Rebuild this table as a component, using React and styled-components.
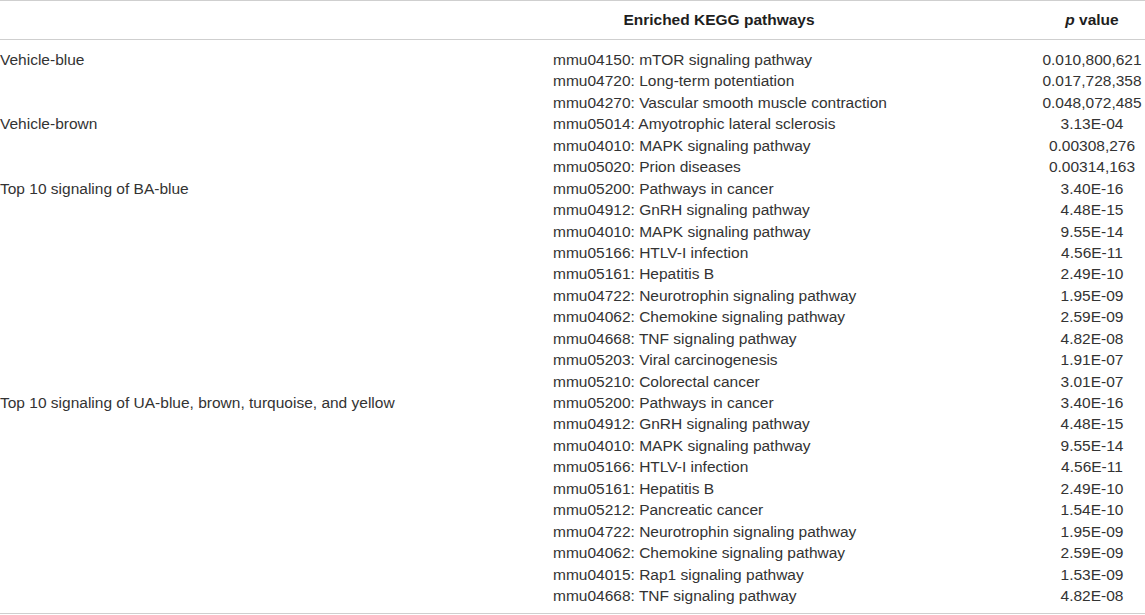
import React from 'react';
import styled, { createGlobalStyle } from 'styled-components';

const Global = createGlobalStyle`
  html, body { margin: 0; padding: 0; background: #fff; }
  body { font-family: "Liberation Sans", Arial, Helvetica, sans-serif; }
`;

const Table = styled.div`
  width: 1145px;
  box-sizing: border-box;
  border-top: 1px solid #cfcfcf;
  border-bottom: 1px solid #cfcfcf;
  color: #333;
  font-size: 15.5px;
`;

const Grid = styled.div`
  display: grid;
  grid-template-columns: 553px 1fr 102px;
  padding-right: 2px;
`;

const HeadRow = styled(Grid)`
  height: 38px;
  align-items: center;
  border-bottom: 1px solid #cfcfcf;
  font-weight: bold;
  color: #1e1e1e;
`;

const PathwayHeading = styled.div`
  width: 332px;
  text-align: center;
`;

const ValueHeading = styled.div`
  text-align: center;
`;

const Body = styled(Grid)`
  padding-top: 9px;
  padding-bottom: 7px;
  line-height: 21.44px;
`;

const Cell = styled.div`
  white-space: nowrap;
  text-align: ${(p) => (p.$center ? 'center' : 'left')};
`;

const groups = [
  {
    label: 'Vehicle-blue',
    rows: [
      ['mmu04150: mTOR signaling pathway', '0.010,800,621'],
      ['mmu04720: Long-term potentiation', '0.017,728,358'],
      ['mmu04270: Vascular smooth muscle contraction', '0.048,072,485'],
    ],
  },
  {
    label: 'Vehicle-brown',
    rows: [
      ['mmu05014: Amyotrophic lateral sclerosis', '3.13E-04'],
      ['mmu04010: MAPK signaling pathway', '0.00308,276'],
      ['mmu05020: Prion diseases', '0.00314,163'],
    ],
  },
  {
    label: 'Top 10 signaling of BA-blue',
    rows: [
      ['mmu05200: Pathways in cancer', '3.40E-16'],
      ['mmu04912: GnRH signaling pathway', '4.48E-15'],
      ['mmu04010: MAPK signaling pathway', '9.55E-14'],
      ['mmu05166: HTLV-I infection', '4.56E-11'],
      ['mmu05161: Hepatitis B', '2.49E-10'],
      ['mmu04722: Neurotrophin signaling pathway', '1.95E-09'],
      ['mmu04062: Chemokine signaling pathway', '2.59E-09'],
      ['mmu04668: TNF signaling pathway', '4.82E-08'],
      ['mmu05203: Viral carcinogenesis', '1.91E-07'],
      ['mmu05210: Colorectal cancer', '3.01E-07'],
    ],
  },
  {
    label: 'Top 10 signaling of UA-blue, brown, turquoise, and yellow',
    rows: [
      ['mmu05200: Pathways in cancer', '3.40E-16'],
      ['mmu04912: GnRH signaling pathway', '4.48E-15'],
      ['mmu04010: MAPK signaling pathway', '9.55E-14'],
      ['mmu05166: HTLV-I infection', '4.56E-11'],
      ['mmu05161: Hepatitis B', '2.49E-10'],
      ['mmu05212: Pancreatic cancer', '1.54E-10'],
      ['mmu04722: Neurotrophin signaling pathway', '1.95E-09'],
      ['mmu04062: Chemokine signaling pathway', '2.59E-09'],
      ['mmu04015: Rap1 signaling pathway', '1.53E-09'],
      ['mmu04668: TNF signaling pathway', '4.82E-08'],
    ],
  },
];

export default function App() {
  return (
    <>
      <Global />
      <Table>
        <HeadRow>
          <div />
          <PathwayHeading>Enriched KEGG pathways</PathwayHeading>
          <ValueHeading>
            <i>p</i> value
          </ValueHeading>
        </HeadRow>
        <Body>
          {groups.map((g) =>
            g.rows.map(([path, val], i) => (
              <React.Fragment key={g.label + i}>
                <Cell>{i === 0 ? g.label : ''}</Cell>
                <Cell>{path}</Cell>
                <Cell $center>{val}</Cell>
              </React.Fragment>
            ))
          )}
        </Body>
      </Table>
    </>
  );
}
